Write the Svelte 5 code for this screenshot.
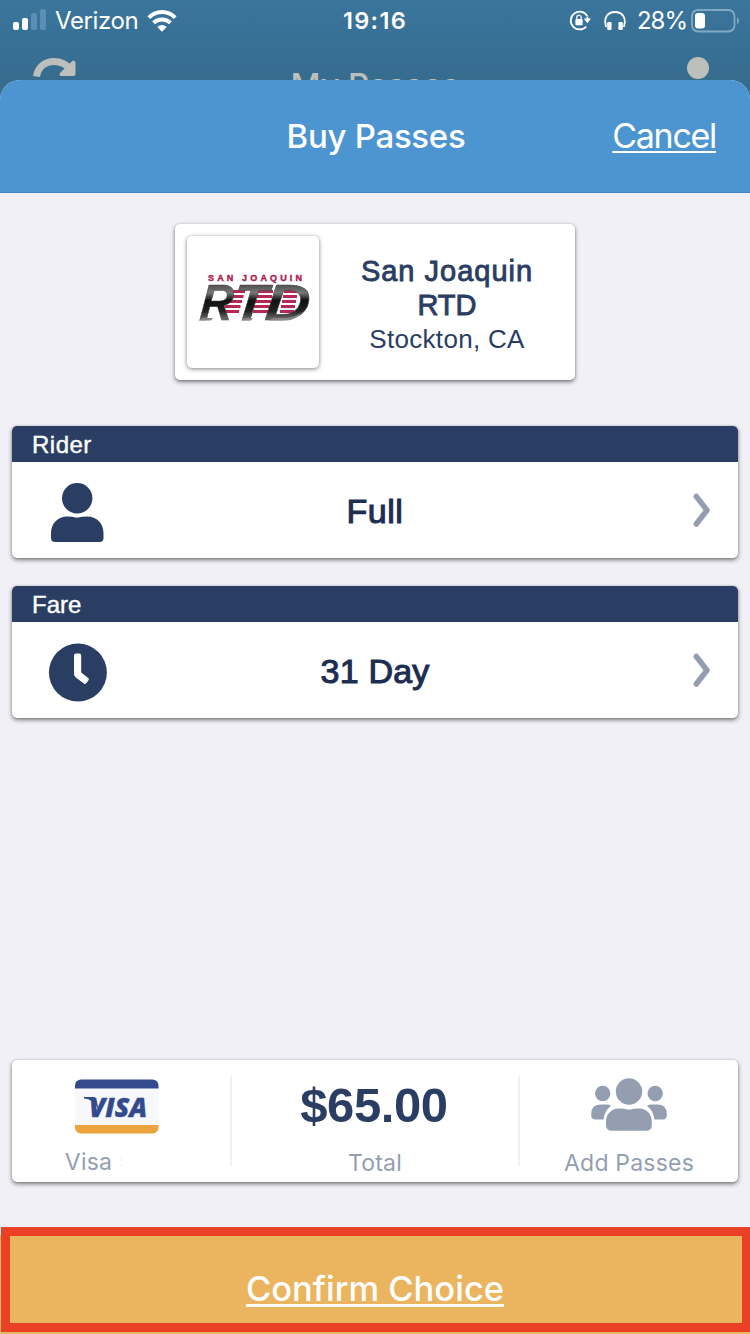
<script>
  const stripes = [0, 1, 2, 3, 4];
</script>

<main class="screen">
  <div class="status">
    <div class="left">
      <svg class="signal" width="34" height="22" viewBox="0 0 34 22">
        <rect x="0" y="13" width="6" height="8" rx="2" fill="#fff" />
        <rect x="9" y="9" width="6" height="12" rx="2" fill="#fff" />
        <rect x="18" y="4" width="6" height="17" rx="2" fill="#5a8fb2" />
        <rect x="27" y="0" width="6" height="21" rx="2" fill="#5a8fb2" />
      </svg>
      <span class="carrier">Verizon</span>
      <svg class="wifi" width="30" height="23" viewBox="0 0 30 23">
        <g fill="none" stroke="#fff" stroke-width="4">
          <path d="M1.8 8.600Q7.500 3 15 3t13.200 5.600" />
          <path d="M6.500 13.700Q10.100 10.400 15 10.400t8.500 3.300" />
        </g>
        <path d="M10.300 18q4.700-4 9.400 0L15 22.700Z" fill="#fff" />
      </svg>
    </div>
    <span class="time">19:16</span>
    <div class="right">
      <svg width="22" height="22" viewBox="0 0 22 22">
        <path d="M18.300 6A8.900 8.900 0 1 0 17.200 16.600" fill="none" stroke="#fff" stroke-width="1.800" />
        <path d="M14.800 8.600H22L18.400 13.200Z" fill="#fff" />
        <path d="M18.400 10V6.500" stroke="#fff" stroke-width="1.800" />
        <rect x="6.400" y="9" width="7.200" height="6.200" rx="1" fill="#fff" />
        <path d="M7.800 9.500V7.400a2.200 2.200 0 0 1 4.400 0v2.100" fill="none" stroke="#fff" stroke-width="1.300" />
      </svg>
      <svg class="phones" width="22" height="22" viewBox="0 0 22 22">
        <path d="M2.200 17C-1 7.500 3.800 2 11 2s12 5.500 8.800 15" fill="none" stroke="#fff" stroke-width="1.800" />
        <rect x="3.200" y="12" width="4.400" height="8" rx="1.300" fill="#fff" />
        <rect x="14.400" y="12" width="4.400" height="8" rx="1.300" fill="#fff" />
      </svg>
      <span class="percent">28%</span>
      <svg class="battery" width="48" height="24" viewBox="0 0 48 24">
        <rect x="1" y="1" width="42.500" height="21.500" rx="6" fill="none" stroke="#82a9c4" stroke-width="1.800" />
        <rect x="4" y="4" width="10" height="15.500" rx="3" fill="#fff" />
        <path d="M46 8q4 3.800 0 7.600Z" fill="#82a9c4" />
      </svg>
    </div>
  </div>

  <div class="behind">
    <svg class="redo" width="44" height="24" viewBox="0 0 44 24">
      <path d="M3.500 19.500C5 10 12 4.400 21 4.400c7 0 12 2.500 16 7.600" fill="none" stroke="#bcbfbc" stroke-width="7" />
      <path d="M39 4.200Q42 2 42.500 6V17q0 2-2 2H28.500q-3.500-.3-1-3.500Z" fill="#bcbfbc" />
    </svg>
    <span class="oldtitle">My Passes</span>
    <span class="dot"></span>
  </div>

  <section class="sheet">
    <header>
      <h1>Buy Passes</h1>
      <span class="cancel">Cancel</span>
    </header>

    <div class="content">
      <div class="agency card">
        <div class="logo">
          <svg width="132" height="132" viewBox="0 0 132 132">
            <defs>
              <linearGradient id="steel" x1="0" y1="0" x2="0" y2="1">
                <stop offset="0.150" stop-color="#444" />
                <stop offset="0.330" stop-color="#777" />
                <stop offset="0.460" stop-color="#111" />
                <stop offset="0.650" stop-color="#222" />
                <stop offset="0.850" stop-color="#888" />
              </linearGradient>
            </defs>
            <text x="21" y="44.500" textLength="94" font-family="Liberation Sans, sans-serif" font-size="9" font-weight="700" fill="#aa2150" stroke="#aa2150" stroke-width=".4">SAN JOAQUIN</text>
            {#each stripes as i}
              <g fill="#b52854">
                <rect x={42 - i * 1.500} y={54 + i * 5} width="16" height="3" />
                <rect x={70 - i} y={54 + i * 5} width="16" height="3" />
                <rect x={97 - i} y={54 + i * 5} width="14" height="3" />
              </g>
            {/each}
            <path d="M29 53h8q4 2 1 7l-6 4h-6z" fill="#fff" />
            <g font-family="Liberation Sans, sans-serif" font-size="51" font-weight="700" font-style="italic" fill="url(#steel)" stroke="#444" stroke-width=".5">
              <text transform="translate(12 84) skewX(-5)" textLength="33" lengthAdjust="spacingAndGlyphs">R</text>
              <text transform="translate(45 84) skewX(-5)" textLength="34" lengthAdjust="spacingAndGlyphs">T</text>
              <text transform="translate(77 84) skewX(-5)" textLength="45" lengthAdjust="spacingAndGlyphs">D</text>
            </g>
            <path d="M11 84.500l5-2.500h10l-2 2.500zM54 84.500l3-2.500h9l-2 2.500zM82 84.500l4-2.500h14q9-1 15-6-6 8.500-16 8.500z" fill="#888" />
          </svg>
        </div>
        <div class="place">
          <strong><span class="sj">San Joaquin</span><br /><span class="rtd">RTD</span></strong>
          <span class="city">Stockton, CA</span>
        </div>
      </div>

      <div class="choice card first">
        <div class="label"><span class="rider">Rider</span></div>
        <div class="row">
          <svg width="60" height="62" viewBox="0 0 60 62">
            <circle cx="29.200" cy="17.300" r="15.200" fill="#2a3e63" />
            <path d="M19 35.500q5 0 10 1.300q5-1.300 10-1.300c10 0 16.500 7 16.500 16.500V57q0 4-4 4H7q-4 0-4-4v-5C3 42.500 10 35.500 19 35.500Z" fill="#2a3e63" />
          </svg>
          <span class="value full">Full</span>
          <svg class="chev" width="18" height="36" viewBox="0 0 18 36"><path d="M3.300 4.500 14 18.200 3.300 32" /></svg>
        </div>
      </div>

      <div class="choice card second">
        <div class="label"><span class="fare">Fare</span></div>
        <div class="row">
          <svg width="60" height="62" viewBox="0 0 60 62">
            <circle cx="29.900" cy="31.500" r="29" fill="#2a3e63" />
            <path d="M28 12.500h3.200q2 0 2 2V31.500l7 5.500q1.300 1 .3 2.300l-2 2.800q-1.200 1.500-2.700.3l-8-6Q26 35 26 33V14.500q0-2 2-2Z" fill="#fff" />
          </svg>
          <span class="value day">31 Day</span>
          <svg class="chev" width="18" height="36" viewBox="0 0 18 36"><path d="M3.300 4.500 14 18.200 3.300 32" /></svg>
        </div>
      </div>

      <div class="summary card">
        <div class="cell pay">
          <svg width="84" height="56" viewBox="0 0 84 56">
            <clipPath id="cardShape"><rect x="0" y="1.500" width="83.500" height="54" rx="6" /></clipPath>
            <g clip-path="url(#cardShape)">
              <rect width="84" height="56" fill="#f6f8fc" />
              <rect width="84" height="10.500" fill="#334a8d" />
              <rect y="47" width="84" height="9" fill="#eda43f" />
            </g>
            <text x="14" y="38.500" textLength="58" lengthAdjust="spacingAndGlyphs" font-family="Open Sans, sans-serif" font-size="27" font-weight="800" font-style="italic" fill="#334a8d" stroke="#334a8d" stroke-width=".4">VISA</text>
            <path d="M9 19h9q3 0 3.500 3l2 9Q18 21 9 20.500Z" fill="#334a8d" />
          </svg>
          <span class="caption visa">Visa <i></i></span>
        </div>
        <div class="cell total">
          <b>$65.00</b>
          <span class="caption">Total</span>
        </div>
        <div class="cell add">
          <svg width="76" height="56" viewBox="0 0 76 56" fill="#939fb1">
            <circle cx="38" cy="14.500" r="13.200" />
            <circle cx="11.700" cy="16.500" r="7.700" />
            <circle cx="64.200" cy="16.500" r="7.700" />
            <path d="M28 31.500q5 0 10 1.200q5-1.200 10-1.200c8 0 12.800 6 12.800 13V48q0 5.800-6 5.800H21q-6 0-6-5.800v-3.500c0-7 5-13 13-13Z" />
            <path d="M10 27.600h6q2 0 4 1.300Q13.500 33 12.600 42.500H4.500q-4.300 0-4.300-4V37q0-9.400 9.800-9.400ZM66 27.600h-6q-2 0-4 1.300Q62.500 33 63.400 42.500h8.100q4.300 0 4.300-4V37q0-9.400-9.800-9.400Z" />
          </svg>
          <span class="caption passes">Add Passes</span>
        </div>
      </div>
    </div>

    <div class="confirm"><span>Confirm Choice</span></div>
  </section>
  <div class="highlight"></div>
</main>

<style>
  :global(body) { margin: 0; }
  * { box-sizing: border-box; }
  svg { display: block; flex: none; }
  span, b, strong { white-space: nowrap; }
  .screen {
    position: relative; width: 750px; height: 1334px; overflow: hidden;
    display: flex; flex-direction: column;
    background: linear-gradient(#3a759d, #366c8e 80px, #366c8e 100px);
    font-family: Inter, sans-serif; color: #fff;
  }
  .status { height: 40px; display: grid; grid-template-columns: 1fr auto 1fr; align-items: center; padding: 0 11px 0 13px; font-size: 24px; line-height: 40px; }
  .left, .right { display: flex; align-items: center; }
  .right { justify-content: flex-end; }
  .signal { margin-top: -1px; }
  .carrier { margin-left: 8px; padding-top: 1px; letter-spacing: -0.400px; }
  .wifi { margin-left: 9px; }
  .time { font-weight: 600; font-size: 23.500px; letter-spacing: 1.300px; padding-top: 1px; margin-left: -1px; margin-right: 1px; }
  .phones { margin-left: 13px; }
  .percent { margin-left: 11px; font-size: 24px; letter-spacing: -1px; padding-top: 1px; }
  .battery { margin-left: 4px; }
  .behind { height: 40px; display: grid; grid-template-columns: 1fr auto 1fr; align-items: start; padding: 0 41px 0 33px; overflow: hidden; }
  .redo { margin-top: 16.500px; }
  .oldtitle { font-size: 33px; line-height: 40px; margin-top: 25px; margin-right: -8px; font-weight: 500; letter-spacing: -.200px; color: #bcbfbc; }
  .dot { width: 22px; height: 22px; margin-top: 17px; border-radius: 50%; background: #bcbfbc; justify-self: end; }
  .sheet { flex: 1; display: flex; flex-direction: column; overflow: hidden; border-radius: 20px 20px 0 0; background: #f1f0f6; }
  header { height: 113px; flex: none; display: grid; grid-template-columns: 1fr auto 1fr; align-items: center; padding: 0 34px; background: #4c95d0; border-bottom: 1px solid #4085bd; }
  h1 { grid-column: 2; margin: 0 -1px 0 1px; font-size: 33px; line-height: 40px; font-weight: 500; letter-spacing: -0.300px; }
  .cancel { justify-self: end; font-size: 34px; line-height: 40px; letter-spacing: -1.300px; text-decoration: underline; text-decoration-thickness: 2px; text-underline-offset: 3px; text-decoration-skip-ink: none; }
  .content { flex: 1; display: flex; flex-direction: column; padding: 31px 12px 0; color: #2a3e63; }
  .card { background: #fff; border-radius: 5px; box-shadow: 0 2px 4px rgba(0, 0, 0, .5), 0 0 2px rgba(0, 0, 0, .15); flex: none; }
  .agency { width: 400px; height: 156px; align-self: center; display: flex; padding: 12px 0 12px 12px; }
  .logo { width: 132px; height: 132px; border-radius: 5px; box-shadow: 0 1px 4px rgba(0, 0, 0, .5); }
  .place { flex: 1; display: flex; flex-direction: column; align-items: center; padding: 18px 0 0; text-align: center; font-family: "Liberation Sans", sans-serif; }
  .place strong { font-size: 29px; line-height: 34px; font-weight: 400; -webkit-text-stroke: .9px #2a3e63; }
  .sj { letter-spacing: 1px; }
  .city { font-size: 26px; line-height: 34px; letter-spacing: .300px; }
  .choice { height: 132px; overflow: hidden; font-family: "Liberation Sans", sans-serif; }
  .first { margin-top: 46px; }
  .second { margin-top: 28px; }
  .label { height: 36px; padding-left: 20px; background: #2a3e63; color: #fff; font-size: 24px; line-height: 37px; -webkit-text-stroke: .400px #fff; }
  .rider { letter-spacing: .500px; }
  .row { height: 96px; display: grid; grid-template-columns: 1fr auto 1fr; align-items: center; padding: 0 27px 0 36px; }
  .row svg:first-child { margin-top: 4px; }
  .value { font-size: 34px; line-height: 40px; margin-top: 2px; margin-right: 9px; -webkit-text-stroke: 1.100px #1e2e52; color: #1e2e52; }
  .full { letter-spacing: .500px; }
  .day { letter-spacing: .200px; }
  .chev { justify-self: end; }
  .chev path { fill: none; stroke: #939fb1; stroke-width: 5.500; stroke-linecap: round; stroke-linejoin: round; }
  .summary { margin-top: 342px; height: 122px; display: grid; grid-template-columns: 220px 288px 1fr; padding: 16px 0; }
  .cell { height: 90px; display: flex; flex-direction: column; align-items: center; border-right: 2px solid #f1f0f6; }
  .pay { padding-right: 9px; }
  .pay svg { margin-top: 2px; }
  .total b { font-family: "Liberation Sans", sans-serif; font-size: 49px; line-height: 60px; letter-spacing: -.400px; margin: -1px 2px 1px 0; }
  .add { border: 0; }
  .add svg { margin-top: 1px; }
  .caption { font-size: 23px; line-height: 30px; color: #939fb1; margin-top: 13px; letter-spacing: .200px; }
  .total .caption { margin-top: 12px; }
  .add .caption { margin-top: 15px; }
  .visa { display: flex; align-items: center; margin-right: 46px; }
  .visa i { width: 1px; height: 10px; margin-left: 9px; border: solid #e5e9ef; border-width: 4px 0 2px; }
  .confirm { height: 99px; flex: none; display: flex; justify-content: center; padding-top: 33px; background: #ebb55f; }
  .confirm span { font-size: 34.500px; line-height: 42px; font-weight: 550; text-decoration: underline; text-decoration-thickness: 3px; text-underline-offset: 3px; text-decoration-skip-ink: none; }
  .highlight { position: absolute; left: 1px; top: 1227px; width: 750px; height: 105px; border: 9px solid #ea4126; }
</style>
